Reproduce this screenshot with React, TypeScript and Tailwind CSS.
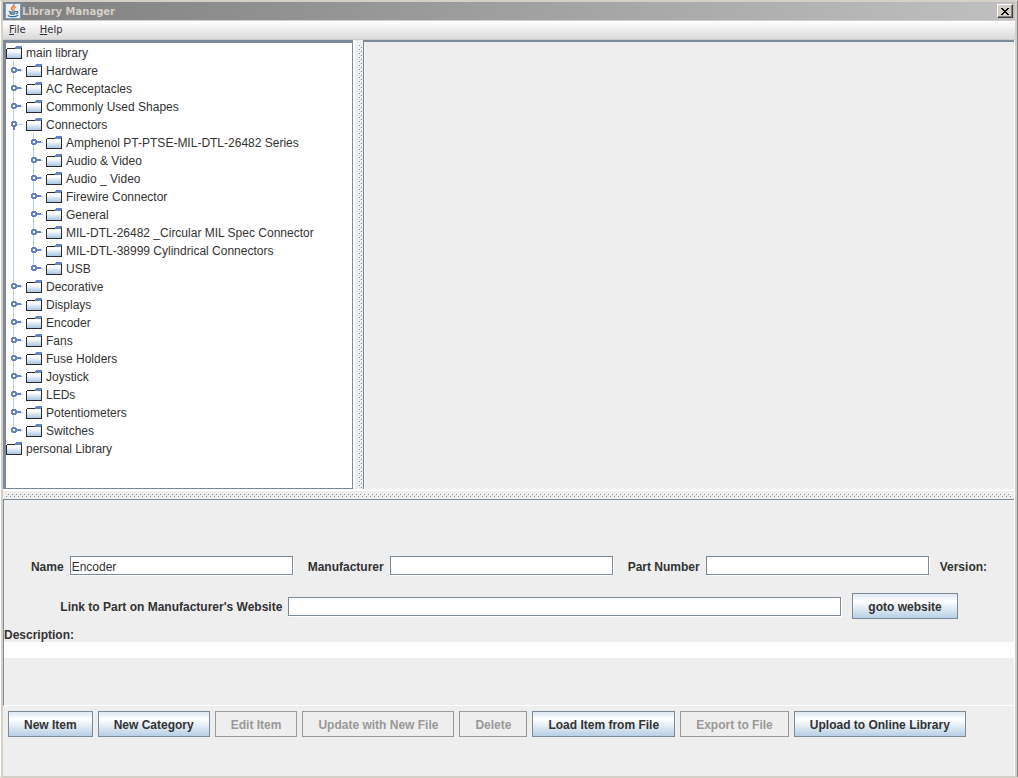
import React, { useState } from "react";

interface TreeItem {
  name: string;
  children?: TreeItem[];
}

const connectors: TreeItem[] = [
  { name: "Amphenol PT-PTSE-MIL-DTL-26482 Series" },
  { name: "Audio & Video" },
  { name: "Audio _ Video" },
  { name: "Firewire Connector" },
  { name: "General" },
  { name: "MIL-DTL-26482 _Circular MIL Spec Connector" },
  { name: "MIL-DTL-38999 Cylindrical Connectors" },
  { name: "USB" },
];

const mainLibrary: TreeItem[] = [
  { name: "Hardware" },
  { name: "AC Receptacles" },
  { name: "Commonly Used Shapes" },
  { name: "Connectors", children: connectors },
  { name: "Decorative" },
  { name: "Displays" },
  { name: "Encoder" },
  { name: "Fans" },
  { name: "Fuse Holders" },
  { name: "Joystick" },
  { name: "LEDs" },
  { name: "Potentiometers" },
  { name: "Switches" },
];

const actions = [
  { label: "New Item", enabled: true },
  { label: "New Category", enabled: true },
  { label: "Edit Item", enabled: false },
  { label: "Update with New File", enabled: false },
  { label: "Delete", enabled: false },
  { label: "Load Item from File", enabled: true },
  { label: "Export to File", enabled: false },
  { label: "Upload to Online Library", enabled: true },
];

function JavaIcon() {
  return (
    <svg width="16" height="16" viewBox="0 0 16 16" className="shrink-0">
      <rect width="16" height="16" fill="#6f9cc4" />
      <rect x="1" y="1" width="14" height="14" fill="#eaf1f6" />
      <g fill="none" strokeLinecap="round">
        <path d="M9 1.500c1 2-3.200 2.700-2.600 4.300.2.700.9.900 1.100 1.700" stroke="#e8762c" strokeWidth="1.600" />
        <path d="M10.700 4c-2 1-2.400 1.700-1.300 3.200" stroke="#e8762c" strokeWidth="1.200" />
        <path
          d="M4.200 8.600c1.500.7 4.500.7 6 0M5 10.600c1.500.6 3.300.6 4.800 0M11 8.600c2.200-.6 2.200 1.500.3 2.200M3.200 12.700c2.500 1.300 7 1.200 9.500-.3"
          stroke="#3a6a9a"
          strokeWidth="1.200"
        />
      </g>
    </svg>
  );
}

function FolderIcon() {
  return (
    <svg width="16" height="13" viewBox="0 0 16 13" shapeRendering="crispEdges" className="shrink-0">
      <defs>
        <linearGradient id="folder" x1="0" y1="0" x2="0" y2="1">
          <stop offset="0.2" stopColor="#ffffff" />
          <stop offset="1" stopColor="#a9c6e3" />
        </linearGradient>
      </defs>
      <rect x="1" y="3" width="14" height="9" fill="url(#folder)" />
      <path d="M10 0h6v1h-6zM9 1h7v1h-7zM9 2h6v1h-6z" fill="#6382bf" />
      <path d="M1 2h8v1h-8zM0 3h1v10h-1zM15 2h1v11h-1zM1 12h14v1h-14z" fill="#2b2b2b" />
    </svg>
  );
}

function HandleIcon({ open }: { open: boolean }) {
  return (
    <svg width="20" height="18" viewBox="0 0 20 18" shapeRendering="crispEdges">
      <path d="M11 9h6v1h-6z" fill="#b8cfe5" />
      <path d="M6 6h4v1h1v4h-1v1h-4v-1h-1v-4h1z" fill="#6382bf" />
      <path d={open ? "M7 12h2v3h-2z" : "M11 8h4v2h-4z"} fill="#6382bf" />
      <path d="M7 8h2v2h-2z" fill="#ffffff" />
    </svg>
  );
}

function NodeLabel({ name, onClick }: { name: string; onClick: () => void }) {
  return (
    <button type="button" onClick={onClick} className="flex h-[18px] items-center gap-1 whitespace-nowrap">
      <FolderIcon />
      <span className="pt-[2px]">{name}</span>
    </button>
  );
}

interface BranchProps {
  item: TreeItem;
  onSelect: (name: string) => void;
}

function Branch({ item, onSelect }: BranchProps) {
  const [open, setOpen] = useState(item.children !== undefined);

  return (
    <li className="relative before:absolute before:top-0 before:left-[7px] before:h-full before:w-px before:bg-[#b8cfe5] last:before:h-2">
      <div className="relative flex">
        <button type="button" aria-label={`Toggle ${item.name}`} onClick={() => setOpen(!open)}>
          <HandleIcon open={open} />
        </button>
        <NodeLabel name={item.name} onClick={() => onSelect(item.name)} />
      </div>
      {open && item.children && (
        <ul className="ml-5">
          {item.children.map((child) => (
            <Branch key={child.name} item={child} onSelect={onSelect} />
          ))}
        </ul>
      )}
    </li>
  );
}

function SplitDots({ id, vertical }: { id: string; vertical?: boolean }) {
  return (
    <svg className="h-full w-full" shapeRendering="crispEdges">
      <defs>
        <pattern id={id} width={vertical ? 12 : 4} height={vertical ? 4 : 8} patternUnits="userSpaceOnUse">
          {vertical ? (
            <>
              <path d="M3 0h1v1h-1zM5 2h1v1h-1z" fill="#ffffff" />
              <path d="M4 1h1v1h-1zM6 3h1v1h-1z" fill="#7a8a99" />
            </>
          ) : (
            <>
              <path d="M2 2h1v1h-1zM0 4h1v1h-1z" fill="#ffffff" />
              <path d="M3 3h1v1h-1zM1 5h1v1h-1z" fill="#7a8a99" />
            </>
          )}
        </pattern>
      </defs>
      <rect width="100%" height="100%" fill={`url(#${id})`} />
    </svg>
  );
}

function MetalButton({ label, enabled = true }: { label: string; enabled?: boolean }) {
  return (
    <button
      type="button"
      disabled={!enabled}
      className="h-[26px] border border-[#7a8a99] bg-linear-to-b from-[#dde8f3] via-white via-30% to-[#b8cfe5] px-[15px] pt-[2px] font-bold whitespace-nowrap disabled:border-[#999999] disabled:bg-[#eeeeee] disabled:bg-none disabled:text-[#999999]"
    >
      {label}
    </button>
  );
}

interface FieldProps {
  id: string;
  label: string;
  value: string;
  onChange: (value: string) => void;
  wide?: boolean;
}

function Field({ id, label, value, onChange, wide }: FieldProps) {
  return (
    <div className="flex items-center gap-[6px]">
      <label htmlFor={id} className="pt-[2px] font-bold whitespace-nowrap">
        {label}
      </label>
      <input
        id={id}
        type="text"
        value={value}
        onChange={(e) => onChange(e.target.value)}
        className={`${wide ? "w-[553px]" : "w-[223px]"} h-[19px] border border-[#7a8a99] bg-white px-px pt-[2px] shadow-[1px_1px_0_white] outline-none`}
      />
    </div>
  );
}

export default function App() {
  const [name, setName] = useState("Encoder");
  const [manufacturer, setManufacturer] = useState("");
  const [partNumber, setPartNumber] = useState("");
  const [link, setLink] = useState("");
  const [description, setDescription] = useState("");

  return (
    <div className="flex min-h-screen flex-col border-t-2 border-r border-b-2 border-l border-t-[#d4d0c8] border-r-[#808080] border-b-[#d4d0c8] border-l-white bg-[#eeeeee] font-['Liberation_Sans',Arial,sans-serif] text-xs text-[#333333]">
      <div className="flex grow flex-col border-x-2 border-[#d4d0c8]">
        <header className="flex h-[18px] items-center bg-linear-to-r from-[#808080] to-[#c0c0c0] px-[2px]">
          <JavaIcon />
          <h1 className="ml-px grow pt-px font-['DejaVu_Sans',Verdana,sans-serif] text-[10px] font-bold text-[#d4d0c8]">
            Library Manager
          </h1>
          <button
            type="button"
            aria-label="Close"
            className="flex h-[14px] w-4 items-center justify-center border border-t-white border-r-[#404040] border-b-[#404040] border-l-white bg-[#d4d0c8] shadow-[inset_-1px_-1px_0_#808080]"
          >
            <svg width="8" height="7" viewBox="0 0 8 7" shapeRendering="crispEdges">
              <path
                d="M0 0h2v1h-2zM6 0h2v1h-2zM1 1h2v1h-2zM5 1h2v1h-2zM2 2h4v1h-4zM3 3h2v1h-2zM2 4h4v1h-4zM1 5h2v1h-2zM5 5h2v1h-2zM0 6h2v1h-2zM6 6h2v1h-2z"
                fill="#000000"
              />
            </svg>
          </button>
        </header>

        <nav className="flex h-[20px] items-center gap-[14px] border-t border-b border-t-[#d4d0c8] border-b-[#cccccc] bg-linear-to-b from-white to-[#dadada] px-[6px] font-['DejaVu_Sans',Verdana,sans-serif] text-[10px]">
          <button type="button">
            <u>F</u>ile
          </button>
          <button type="button">
            <u>H</u>elp
          </button>
        </nav>

        <main className="flex grow flex-col border-r border-white">
          <div className="flex grow border-b-2 border-white">
            <section className="w-[350px] shrink-0 border-t-3 border-r border-b border-l-3 border-[#7a8a99] bg-white">
              <ul>
                <li>
                  <NodeLabel name="main library" onClick={() => setName("main library")} />
                  <ul>
                    {mainLibrary.map((item) => (
                      <Branch key={item.name} item={item} onSelect={setName} />
                    ))}
                  </ul>
                </li>
                <li>
                  <NodeLabel name="personal Library" onClick={() => setName("personal Library")} />
                </li>
              </ul>
            </section>
            <div className="w-[10px] shrink-0 cursor-col-resize border-l-2 border-white pt-1">
              <SplitDots id="dots-vertical" vertical />
            </div>
            <section className="grow border-t-2 border-l border-[#7a8a99]" />
          </div>

          <div className="h-2 cursor-row-resize px-[2px]">
            <SplitDots id="dots-horizontal" />
          </div>

          <section className="flex flex-col border-t border-b border-l border-t-[#7a8a99] border-b-white border-l-[#7a8a99] pt-14 pb-[47px]">
            <div className="flex items-center justify-center">
              <Field id="name" label="Name" value={name} onChange={setName} />
              <div className="ml-[15px]">
                <Field id="manufacturer" label="Manufacturer" value={manufacturer} onChange={setManufacturer} />
              </div>
              <div className="ml-[15px]">
                <Field id="part-number" label="Part Number" value={partNumber} onChange={setPartNumber} />
              </div>
              <span className="ml-[11px] pt-[2px] font-bold">Version:</span>
            </div>
            <div className="mt-[18px] flex items-center justify-center gap-[11px]">
              <Field id="link" label="Link to Part on Manufacturer's Website" value={link} onChange={setLink} wide />
              <MetalButton label="goto website" />
            </div>
            <label htmlFor="description" className="mt-2 pt-px leading-[14px] font-bold">
              Description:
            </label>
            <textarea
              id="description"
              rows={1}
              value={description}
              onChange={(e) => setDescription(e.target.value)}
              className="block h-4 w-full resize-none bg-white outline-none"
            />
          </section>

          <footer className="flex flex-wrap gap-[5px] px-[5px] pt-[5px] pb-[39px]">
            {actions.map((action) => (
              <MetalButton key={action.label} label={action.label} enabled={action.enabled} />
            ))}
          </footer>
        </main>
      </div>
    </div>
  );
}
